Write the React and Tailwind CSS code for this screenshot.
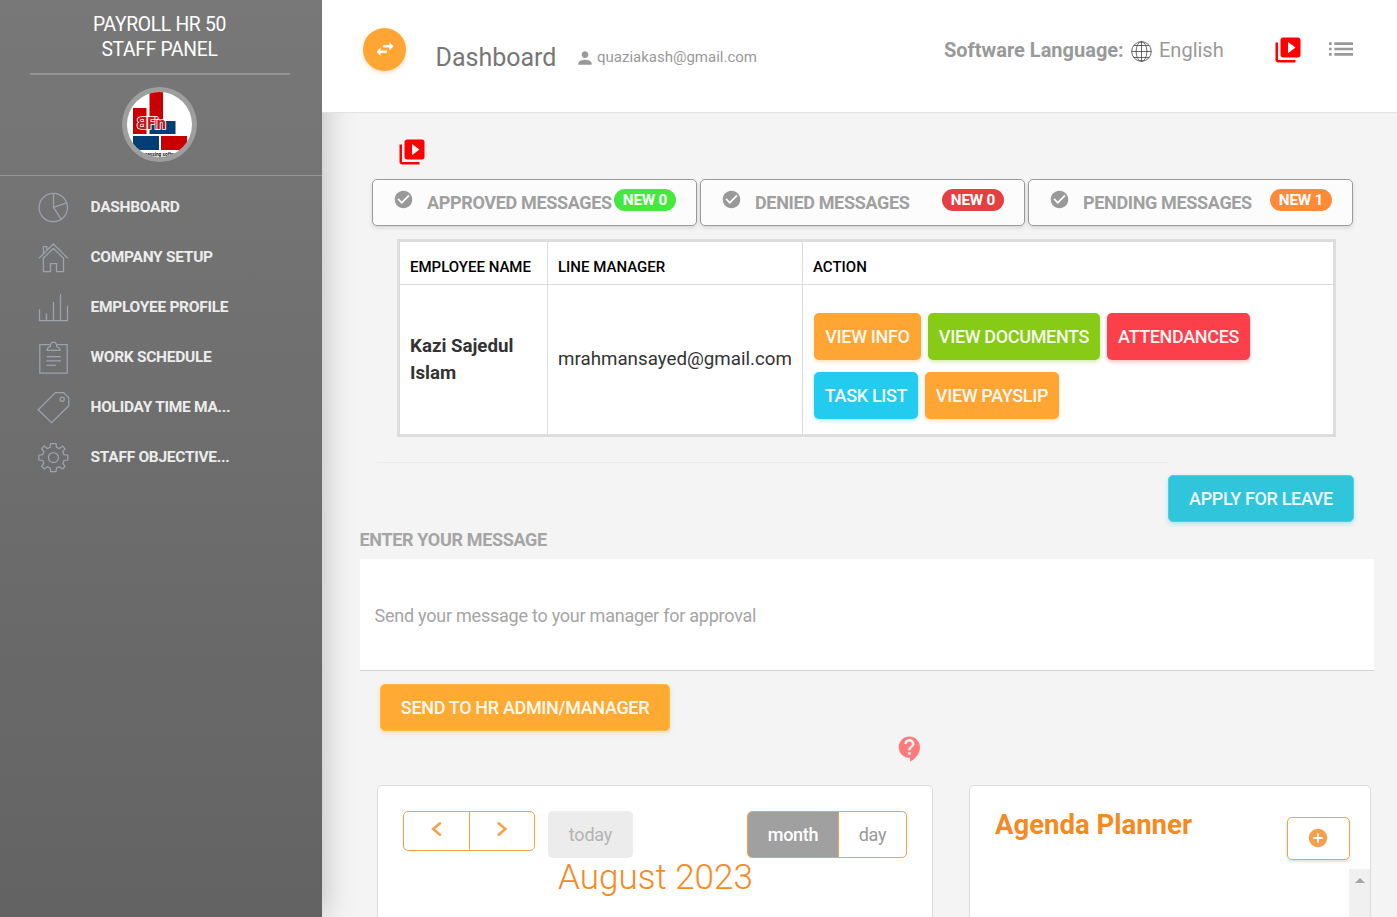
import React from "react";
import {
  MdAddCircle,
  MdCheckCircle,
  MdContactSupport,
  MdList,
  MdPerson,
  MdVideoLibrary,
} from "react-icons/md";

const strokeProps = {
  width: 32,
  height: 34,
  viewBox: "0 0 32 34",
  fill: "none",
  stroke: "#9ca3ae",
  strokeWidth: 1.25,
};

function PieIcon() {
  return (
    <svg {...strokeProps}>
      <circle cx="16.3" cy="17.5" r="14.2" />
      <path d="M16.5 3.3V17.3L29.5 12.8M16.5 17.3L24.3 29.4" />
    </svg>
  );
}

function HomeIcon() {
  return (
    <svg {...strokeProps}>
      <path d="M2 18.2L16.3 4L30.7 18.2M6.4 13.6V6.5H9.8V10.2M6.4 16.8V31.5H13.5V23.5H19.5V31.5H26.5V18.2L16.3 8.4L6.4 18.2" />
    </svg>
  );
}

function BarsIcon() {
  return (
    <svg {...strokeProps}>
      <path d="M2.5 19.3V30.5H30.5V15.8M9.5 30V23.2M16.5 30V12M23.5 30V4" />
    </svg>
  );
}

function ClipboardIcon() {
  return (
    <svg {...strokeProps}>
      <path d="M12.8 4.5H2.8V33.2H30.2V4.5H20.2M9.5 16.5H23.8M9.5 20.8H23.8M9.5 25.4H18.8M10 10.4C10 8.4 11 7.3 13.3 6.5C13.6 0.8 19.4 0.8 19.7 6.5C22 7.3 23 8.4 23 10.4Z" />
    </svg>
  );
}

function TagIcon() {
  return (
    <svg {...strokeProps} className="overflow-visible">
      <path d="M1.2 19.7L18.4 2.5H26.6L31.8 7.8V15.7L14.7 32.7Z" />
      <circle cx="25.2" cy="9.2" r="2.1" />
    </svg>
  );
}

function GearIcon() {
  return (
    <svg {...strokeProps}>
      <path d="M13.6 3.5H19L19.5 7.3L22.4 8.5L25.5 6.1L28 8.7L25.8 11.8L27 14.7L30.8 15.2V20L27 20.5L25.8 23.3L28 26.4L25.5 29L22.4 26.7L19.5 27.9L19 31.6H13.6L13.1 27.9L10.3 26.7L7.2 29L4.7 26.4L6.9 23.3L5.7 20.5L1.9 20V15.2L5.7 14.7L6.9 11.8L4.7 8.7L7.2 6.1L10.3 8.5L13.1 7.3Z" />
      <circle cx="16.4" cy="17.6" r="5" />
    </svg>
  );
}

function SwapIcon() {
  return (
    <svg viewBox="0 0 24 24" fill="#fff" stroke="#fff" strokeWidth="0.5" className="-mt-[2px] size-[22px]">
      <path d="M6.99 11L3 15l3.99 4v-3H14v-2H6.99v-3zM21 9l-3.99-4v3H10v2h7.01v3L21 9z" />
    </svg>
  );
}

function Logo() {
  return (
    <svg width="65" height="65" viewBox="0 0 65 65" className="rounded-full bg-white">
      <rect x="22.5" y="0" width="13.5" height="30" fill="#c80000" />
      <rect x="6" y="16" width="13.5" height="26" fill="#c80000" />
      <rect x="22.5" y="29" width="26" height="13" fill="#003e73" />
      <rect x="6" y="44" width="26" height="14" fill="#003e73" />
      <rect x="34" y="44" width="26" height="14" fill="#c80000" />
      <g
        fontFamily="Roboto, sans-serif"
        fontSize="17"
        fontWeight="700"
        fill="#c21a1a"
        stroke="#fff"
        strokeWidth="1.6"
        paintOrder="stroke"
      >
        <text transform="translate(20.5 36.8) scale(-1 1)">B</text>
        <text x="20" y="36.8" textLength="19">Fin</text>
      </g>
      <text x="32.5" y="63.8" fontSize="4.8" fontWeight="700" textAnchor="middle" fontFamily="Roboto, sans-serif" fill="#111">
        processing software
      </text>
    </svg>
  );
}

function Globe() {
  return (
    <svg width="21" height="21" viewBox="0 0 21 21" fill="none" stroke="#444" strokeWidth="0.8">
      <circle cx="10.5" cy="10.5" r="9.8" />
      <ellipse cx="10.5" cy="10.5" rx="5.4" ry="9.8" />
      <path d="M10.5 .7V20.3M.7 10.5H20.3M2.8 4.5H18.2M2.8 16.5H18.2" />
    </svg>
  );
}

const menu = [
  ["DASHBOARD", PieIcon],
  ["COMPANY SETUP", HomeIcon],
  ["EMPLOYEE PROFILE", BarsIcon],
  ["WORK SCHEDULE", ClipboardIcon],
  ["HOLIDAY TIME MA...", TagIcon],
  ["STAFF OBJECTIVE...", GearIcon],
];

function Sidebar() {
  return (
    <aside className="relative z-10 h-[917px] w-[322px] shrink-0 bg-linear-to-b from-[#787878] to-[#636363] shadow-[0_0_30px_rgba(0,0,0,0.25)]">
      <div className="mr-[33px] ml-[30px] h-[75px] w-[260px] border-b-2 border-[#949494] pt-[12px] pr-px text-center text-[19.3px] leading-[25px] tracking-[-0.3px] text-white">
        PAYROLL HR 50<br />STAFF PANEL
      </div>
      <div className="flex h-[101px] border-b border-[#949494] pt-[12px] pl-[122px]">
        <div className="size-[75px] rounded-full bg-[#9e9e9e] p-[5px]">
          <Logo />
        </div>
      </div>
      <nav className="pt-[6px]">
        {menu.map(([label, Icon]) => (
          <a key={label} className="flex h-[50px] items-center pl-[37px]">
            <Icon />
            <span className="ml-[21.5px] pt-[2px] text-[15.5px] font-bold tracking-[-0.28px] text-[#ececec]">{label}</span>
          </a>
        ))}
      </nav>
    </aside>
  );
}

function Header() {
  return (
    <header className="relative z-20 flex h-[113px] shrink-0 items-start border-b border-[#e2e2e2] bg-white">
      <button className="mt-[28px] ml-[41px] flex size-[43px] items-center justify-center rounded-full bg-[#ffa534] shadow-[0_2px_4px_rgba(255,165,52,0.35)]">
        <SwapIcon />
      </button>
      <h1 className="mt-[41px] ml-[29.5px] w-[140.5px] text-[25px] leading-[34px] text-[#777]">Dashboard</h1>
      <MdPerson className="mt-[47.5px] -ml-px size-[20px] text-[#999]" />
      <span className="mt-[46px] ml-[2px] w-[347px] text-[15px] leading-[22px] text-[#999]">quaziakash@gmail.com</span>
      <div className="mt-[36px] flex w-[329px] text-[20px] leading-[28px] text-[#999]">
        <b className="w-[187px] font-bold">Software Language:</b>
        <span className="mt-[5px] h-[21px] w-[28px]"><Globe /></span>
        <span>English</span>
      </div>
      <MdVideoLibrary className="mt-[35px] size-[30px] shrink-0 text-[#f00]" />
      <MdList className="mt-[32.5px] ml-[22px] size-[32px] shrink-0 text-[#999]" />
    </header>
  );
}

const messages = [
  { label: "APPROVED MESSAGES", badge: "NEW 0", tone: "bg-[#44e83f]" },
  { label: "DENIED MESSAGES", badge: "NEW 0", tone: "bg-[#e34141]" },
  { label: "PENDING MESSAGES", badge: "NEW 1", tone: "bg-[#ff8a38]" },
];

function MessageTabs() {
  return (
    <div className="ml-[50px] flex gap-[3px]">
      {messages.map((m) => (
        <button
          key={m.label}
          className="flex h-[47px] w-[325px] items-start rounded-[5px] border border-[#999] bg-[#fcfcfc] pl-[20px] shadow-[0_2px_4px_rgba(0,0,0,0.12)]"
        >
          <MdCheckCircle className="mt-[9px] size-[21px] text-[#999]" />
          <span className="mt-[10px] ml-[13px] w-[187px] text-left text-[18px] leading-[26px] font-bold tracking-[-0.34px] whitespace-nowrap text-[#a0a0a0]">
            {m.label}
          </span>
          <span className={`mt-[9px] h-[22px] w-[62px] rounded-full text-center text-[15.3px] leading-[22px] font-bold tracking-[-0.2px] text-white ${m.tone}`}>
            {m.badge}
          </span>
        </button>
      ))}
    </div>
  );
}

const btn =
  "flex h-[47px] items-center justify-center rounded-[5px] text-[18px] font-medium tracking-[-0.34px] text-white/95 whitespace-nowrap";

function EmployeeTable() {
  return (
    <div className="mt-[13px] ml-[75px] grid h-[198px] w-[939px] grid-cols-[148px_255px_1fr] grid-rows-[43px_1fr] border-[3px] border-[#ddd] bg-white">
      <div className="border-r border-b border-[#ddd] pt-[14px] pl-[10px] text-[15px] leading-[22px] font-medium text-black">EMPLOYEE NAME</div>
      <div className="border-r border-b border-[#ddd] pt-[14px] pl-[10px] text-[15px] leading-[22px] font-medium text-black">LINE MANAGER</div>
      <div className="border-b border-[#ddd] pt-[14px] pl-[10px] text-[15px] leading-[22px] font-medium text-black">ACTION</div>
      <div className="flex items-center border-r border-[#ddd] pl-[10px] text-[18.7px] leading-[27px] font-bold text-[#333]">
        Kazi Sajedul<br />Islam
      </div>
      <div className="flex items-center border-r border-[#ddd] pl-[10px] text-[18.75px] text-[#333]">mrahmansayed@gmail.com</div>
      <div className="flex flex-col gap-[12px] pt-[28px] pl-[11px]">
        <div className="flex gap-[7px]">
          <button className={`${btn} w-[107px] bg-[#ffa534] shadow-[0_2px_4px_rgba(255,165,52,0.35)]`}>VIEW INFO</button>
          <button className={`${btn} w-[172px] bg-[#87cb16] shadow-[0_2px_4px_rgba(135,203,22,0.35)]`}>VIEW DOCUMENTS</button>
          <button className={`${btn} w-[143px] bg-[#fb404b] shadow-[0_2px_4px_rgba(251,64,75,0.35)]`}>ATTENDANCES</button>
        </div>
        <div className="flex gap-[7px]">
          <button className={`${btn} w-[104px] bg-[#23ccef] shadow-[0_2px_4px_rgba(35,204,239,0.35)]`}>TASK LIST</button>
          <button className={`${btn} w-[134px] bg-[#ffa534] shadow-[0_2px_4px_rgba(255,165,52,0.35)]`}>VIEW PAYSLIP</button>
        </div>
      </div>
    </div>
  );
}

function Chevron({ d }) {
  return (
    <svg width="12" height="16" viewBox="0 0 12 16" fill="none" stroke="#f7a04b" strokeWidth="2.6" strokeLinecap="round">
      <path d={d} />
    </svg>
  );
}

function Calendar() {
  return (
    <section className="h-[160px] w-[556px] rounded-t-[5px] border border-[#ddd] bg-white px-[25px] pt-[25px]">
      <div className="flex items-start">
        <div className="flex h-[40px] w-[132px] rounded-[5px] border border-[#f7a04b]">
          <button className="flex w-[66px] justify-center border-r border-[#f7a04b] pt-[9px]"><Chevron d="M9 2.3L2.2 8L9 13.7" /></button>
          <button className="flex flex-1 justify-center pt-[9px]"><Chevron d="M2.6 2.3L9.4 8L2.6 13.7" /></button>
        </div>
        <button className="ml-[13px] h-[47px] w-[85px] rounded-[5px] bg-[#ececec] text-[18px] tracking-[-0.2px] text-[#b3b3b3]">today</button>
        <div className="ml-auto flex h-[47px] w-[160px] overflow-hidden rounded-[5px] border border-[#f7a04b] text-[18px]">
          <button className="w-[91px] border-r border-[#f7a04b] bg-[#a0a0a0] font-medium tracking-[-0.3px] text-white">month</button>
          <button className="flex-1 tracking-[-0.2px] text-[#999]">day</button>
        </div>
      </div>
      <h2 className="pl-px text-center text-[35px] leading-[40px] font-light text-[#f58a1f]">August 2023</h2>
    </section>
  );
}

function Agenda() {
  return (
    <section className="flex h-[160px] w-[402px] justify-between rounded-t-[5px] border border-[#ddd] bg-white pl-[25px]">
      <h2 className="pt-[20px] text-[27.5px] leading-[38px] font-bold text-[#f58a1f]">Agenda Planner</h2>
      <div className="flex flex-col items-end pt-[31px]">
        <button className="mr-[20px] flex h-[43px] w-[63px] shrink-0 items-center justify-center rounded-[5px] border border-[#f7a04b] shadow-[0_2px_3px_rgba(0,0,0,0.12)]">
          <MdAddCircle className="-mt-[2px] -ml-px size-[22px] text-[#f7a04b]" />
        </button>
        <div className="mt-[9px] flex h-[76px] w-[21px] justify-center bg-[#f0f0f0] pt-[9px]">
          <svg width="10" height="5" viewBox="0 0 10 5" fill="#a3a3a3"><path d="M0 5L5 0L10 5Z" /></svg>
        </div>
      </div>
    </section>
  );
}

export default function App() {
  return (
    <div className="flex h-[917px] w-[1397px] overflow-hidden bg-[#f4f4f4] font-[Roboto,sans-serif]">
      <Sidebar />
      <div className="flex w-[1075px] flex-col">
        <Header />
        <main className="flex flex-col">
          <MdVideoLibrary className="mt-[24px] mb-[12px] ml-[75px] size-[30px] text-[#f00]" />
          <MessageTabs />
          <EmployeeTable />
          <div className="mt-[25px] ml-[55px] w-[791px] border-t border-[#ebebeb]" />
          <button className={`${btn} mt-[12px] ml-[846px] w-[186px] border border-[#45d3ea] bg-[#30c5da] shadow-[0_2px_4px_rgba(48,197,218,0.35)]`}>
            APPLY FOR LEAVE
          </button>
          <label className="mt-[5px] ml-[37.5px] text-[18px] leading-[26px] font-bold tracking-[-0.34px] text-[#a5a5a5]">ENTER YOUR MESSAGE</label>
          <div className="mt-[6px] ml-[38px] flex h-[112px] w-[1014px] items-center border-b border-[#d2d2d2] bg-white pt-[2px] pl-[14.5px] text-[18px] tracking-[-0.24px] text-[#a5a5a5]">
            Send your message to your manager for approval
          </div>
          <button className={`${btn} mt-[13px] ml-[58px] w-[290px] border border-[#ffb848] bg-[#ffaa32] shadow-[0_2px_4px_rgba(255,165,52,0.35)]`}>
            SEND TO HR ADMIN/MANAGER
          </button>
          <MdContactSupport className="mt-[3px] mb-[21px] ml-[572.5px] size-[30px] text-[#ff7b7b]" />
          <div className="ml-[55px] flex gap-[36px]">
            <Calendar />
            <Agenda />
          </div>
        </main>
      </div>
    </div>
  );
}
